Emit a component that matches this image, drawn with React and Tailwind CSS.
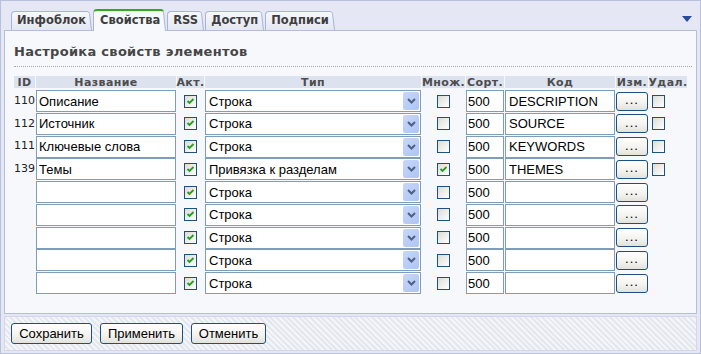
import React from 'react';

const rows = [
  { id: '110', name: 'Описание', type: 'Строка', multi: false, code: 'DESCRIPTION', del: true },
  { id: '112', name: 'Источник', type: 'Строка', multi: false, code: 'SOURCE', del: true },
  { id: '111', name: 'Ключевые слова', type: 'Строка', multi: false, code: 'KEYWORDS', del: true },
  { id: '139', name: 'Темы', type: 'Привязка к разделам', multi: true, code: 'THEMES', del: true },
  { id: '', name: '', type: 'Строка', multi: false, code: '', del: false },
  { id: '', name: '', type: 'Строка', multi: false, code: '', del: false },
  { id: '', name: '', type: 'Строка', multi: false, code: '', del: false },
  { id: '', name: '', type: 'Строка', multi: false, code: '', del: false },
  { id: '', name: '', type: 'Строка', multi: false, code: '', del: false }
];

const tabs = ['Инфоблок', 'Свойства', 'RSS', 'Доступ', 'Подписи'];

const headers = ['ID', 'Название', 'Акт.', 'Тип', 'Множ.', 'Сорт.', 'Код', 'Изм.', 'Удал.'];

const grid = 'grid grid-cols-[21px_140px_27px_216px_43px_38px_110px_32px_38px] gap-x-px';

function Tab({ label, active }) {
  const fill = active ? '#f6f8fc' : 'url(#tabgrad)';
  return (
    <div className={active ? 'relative z-10 -mb-px flex h-[22px]' : 'flex h-[19px]'}>
      <div
        className={
          active
            ? 'flex items-center rounded-tl-[4px] border-l border-t-2 border-l-[#aab5d5] border-t-[#3aa523] bg-[#f6f8fc] pl-[6px] pr-0 pb-[1px]'
            : 'flex items-center rounded-tl-[4px] border-l border-t border-[#a9b4d4] bg-[linear-gradient(#f7f8fc,#e3e7f2)] pl-[5px] pr-0'
        }
      >
        {label}
      </div>
      <svg width="6" height={active ? 22 : 19} className="block">
        <defs>
          <linearGradient id="tabgrad" x1="0" y1="0" x2="0" y2="1">
            <stop offset="0" stopColor="#f7f8fc" />
            <stop offset="1" stopColor="#e3e7f2" />
          </linearGradient>
        </defs>
        {active ? (
          <>
            <path d="M0 0 H1 Q3 0 3.5 2 L6 22 H0 Z" fill={fill} />
            <path d="M0 1 H1 Q3 1 3.5 3 L5.5 22" fill="none" stroke="#aab5d5" strokeWidth="1" />
            <path d="M0 1 H1 Q2.5 1 3 2" fill="none" stroke="#3aa523" strokeWidth="2" />
          </>
        ) : (
          <>
            <path d="M0 0 H1 Q3 0 3.5 2 L6 19 H0 Z" fill={fill} />
            <path d="M0 0.5 H1 Q3 0.5 3.5 2.5 L5.5 19" fill="none" stroke="#a9b4d4" strokeWidth="1" />
          </>
        )}
      </svg>
    </div>
  );
}

function Check({ checked }) {
  return (
    <div className="h-[13px] w-[13px] border border-[#1c5180] bg-[linear-gradient(135deg,#dcdcd6,#ffffff)]">
      {checked && (
        <svg width="11" height="11" viewBox="0 0 11 11" className="block">
          <path d="M2.5 5 L4.5 7 L8.5 3" fill="none" stroke="#21a121" strokeWidth="1.8" />
        </svg>
      )}
    </div>
  );
}

function Field({ value, className }) {
  return (
    <input
      readOnly
      value={value}
      className={
        'h-[22px] min-w-0 border border-[#7f9db9] bg-white px-[2px] text-[13px] text-black outline-none ' +
        (className || '')
      }
    />
  );
}

function Select({ value }) {
  return (
    <div className="flex h-[22px] items-center justify-between border border-[#7f9db9] bg-white pl-[3px] pr-px">
      <span className="text-[13px] leading-none text-black">{value}</span>
      <div className="flex h-[18px] w-[16px] items-center justify-center rounded-[2px] bg-[linear-gradient(135deg,#c8d7fa,#aec4f2)]">
        <svg width="9" height="6" viewBox="0 0 9 6" className="block">
          <path d="M1 1 L4.5 4.5 L8 1" fill="none" stroke="#4d6185" strokeWidth="2" />
        </svg>
      </div>
    </div>
  );
}

function Button({ children, className }) {
  return (
    <button
      className={
        'flex items-center justify-center rounded-[3px] border border-[#1c4f82] bg-[linear-gradient(#ffffff,#f3f2ee_60%,#e2e1da)] text-[13px] leading-none text-black ' +
        className
      }
    >
      {children}
    </button>
  );
}

export default function App() {
  return (
    <div className="flex h-[354px] w-[701px] flex-col border border-[#b7c0dd] bg-[#e5e8f4] font-['Liberation_Sans',Arial,sans-serif]">
      <div className="flex h-[29px] items-end pl-[10px] pr-[8px] font-['DejaVu_Sans',Verdana,sans-serif] text-[11.5px] font-bold tracking-[0px] text-[#3e3e3e]">
        {tabs.map((t) => (
          <div key={t} className="mr-px">
            <Tab label={t} active={t === 'Свойства'} />
          </div>
        ))}
        <svg width="10" height="6" viewBox="0 0 10 6" className="mb-[8px] ml-auto block">
          <path d="M0 0 H10 L5 6 Z" fill="#2a4b9f" />
        </svg>
      </div>

      <div className="mx-[3px] h-[284px] border border-[#b5bfdd] bg-[#f6f8fc] pl-[9px] pr-[4px]">
        <div className="h-[36px] border-b border-dotted border-[#a8a8a8] pt-[13px] font-['DejaVu_Sans',Verdana,sans-serif] text-[13px] font-bold leading-[16px] tracking-[0.3px] text-[#464646]">
          Настройка свойств элементов
        </div>

        <div className={grid + ' mt-[9px] h-[12px]'}>
          {headers.map((h) => (
            <div
              key={h}
              className="flex items-center justify-center bg-[#dde2ef] font-['DejaVu_Sans',Verdana,sans-serif] text-[11px] font-bold leading-none tracking-[0.4px] text-[#4d4d4d]"
            >
              {h}
            </div>
          ))}
        </div>

        <div className="mt-[2px] flex flex-col gap-y-[0.75px]">
          {rows.map((r, i) => (
            <div key={i} className={grid + ' h-[22px] items-center'}>
              <div className="pr-px text-right font-['DejaVu_Sans',Verdana,sans-serif] text-[11px] text-[#222]">{r.id}</div>
              <Field value={r.name} />
              <div className="flex justify-center">
                <Check checked />
              </div>
              <Select value={r.type} />
              <div className="flex justify-center">
                <Check checked={r.multi} />
              </div>
              <Field value="500" className="px-px" />
              <Field value={r.code} className="px-[3px]" />
              <Button className="h-[19px] w-[32px] pb-[3px] text-[11px] tracking-[1px]">...</Button>
              <div className="flex pl-[3px]">{r.del && <Check checked={false} />}</div>
            </div>
          ))}
        </div>
      </div>

      <div className="mx-[3px] mt-[2px] flex h-[35px] items-start gap-[8px] border border-[#d4d8e6] bg-[repeating-linear-gradient(45deg,#f4f5f9_0px,#f4f5f9_2px,#e5e7ee_2px,#e5e7ee_4px)] pl-[6px] pt-[6px]">
        <Button className="h-[21px] w-[81px]">Сохранить</Button>
        <Button className="h-[21px] w-[83px]">Применить</Button>
        <Button className="h-[21px] w-[75px]">Отменить</Button>
      </div>
    </div>
  );
}
